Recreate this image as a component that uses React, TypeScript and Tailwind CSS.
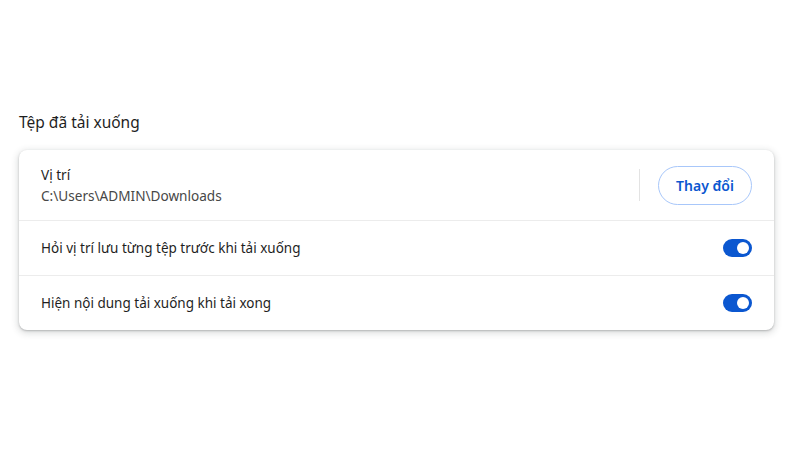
export default function App() {
  return (
    <div
      className="min-h-[450px] w-[800px] bg-white pt-[111px] px-[19px] text-[#1f1f1f]"
      style={{ fontFamily: '"Noto Sans", "Open Sans", sans-serif' }}
    >
      <h2 className="mb-[17px] text-[15.5px] leading-[22px] font-normal">Tệp đã tải xuống</h2>

      <div className="w-[755px] rounded-[8px] bg-white shadow-[0_1px_2px_rgba(60,64,67,0.3),0_2px_6px_2px_rgba(60,64,67,0.15)]">
        {/* Location row */}
        <div className="flex h-[71px] items-center border-b border-[#ececec] px-[22px]">
          <div className="flex-1 pt-[1px]">
            <div className="text-[13.6px] leading-[21px]">Vị trí</div>
            <div className="text-[13.6px] leading-[22px] text-[#474747]">C:\Users\ADMIN\Downloads</div>
          </div>
          <div className="mr-[18px] h-[32px] w-px bg-[#e3e3e3]" />
          <button className="h-[39px] w-[94px] rounded-full border border-[#a8c7fa] text-[14px] font-semibold text-[#0b57d0]">
            Thay đổi
          </button>
        </div>

        {/* Toggle rows */}
        <div className="flex h-[55px] items-center border-b border-[#ececec] px-[22px]">
          <span className="flex-1 text-[13.5px]">Hỏi vị trí lưu từng tệp trước khi tải xuống</span>
          <Toggle />
        </div>
        <div className="flex h-[54px] items-center px-[22px]">
          <span className="flex-1 text-[13.5px]">Hiện nội dung tải xuống khi tải xong</span>
          <Toggle />
        </div>
      </div>
    </div>
  );
}

function Toggle() {
  return (
    <div className="relative h-[18px] w-[29px] rounded-full bg-[#0b57d0]">
      <div className="absolute right-[3px] top-[3px] h-[12px] w-[12px] rounded-full bg-white" />
    </div>
  );
}
